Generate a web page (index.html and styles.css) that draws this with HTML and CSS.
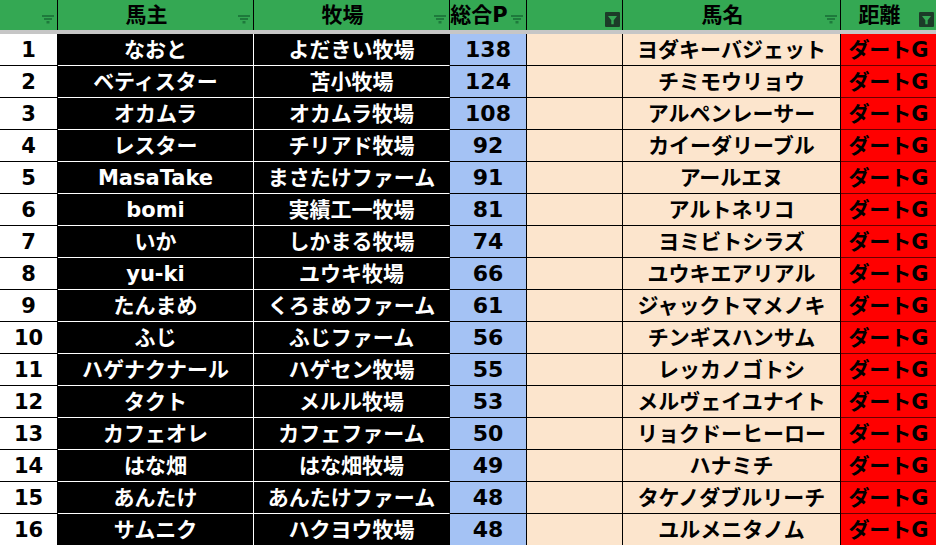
FILE: index.html
```html
<!DOCTYPE html>
<html lang="ja">
<head>
<meta charset="utf-8">
<title>馬主一覧</title>
<link rel="stylesheet" href="styles.css">
</head>
<body>
<div class="sheet">
  <div class="hcell"><span class="label"></span><span class="fbtn"><svg class="fi" width="12" height="9" viewBox="0 0 12 9"><rect x="0" y="0" width="12" height="2"/><rect x="2" y="3" width="8" height="2"/><rect x="4.5" y="6" width="3" height="2.5"/></svg></span></div>
  <div class="hcell"><span class="label">馬主</span><span class="fbtn"><svg class="fi" width="12" height="9" viewBox="0 0 12 9"><rect x="0" y="0" width="12" height="2"/><rect x="2" y="3" width="8" height="2"/><rect x="4.5" y="6" width="3" height="2.5"/></svg></span></div>
  <div class="hcell"><span class="label">牧場</span><span class="fbtn"><svg class="fi" width="12" height="9" viewBox="0 0 12 9"><rect x="0" y="0" width="12" height="2"/><rect x="2" y="3" width="8" height="2"/><rect x="4.5" y="6" width="3" height="2.5"/></svg></span></div>
  <div class="hcell"><span class="label">総合P</span><span class="fbtn"><svg class="fi" width="12" height="9" viewBox="0 0 12 9"><rect x="0" y="0" width="12" height="2"/><rect x="2" y="3" width="8" height="2"/><rect x="4.5" y="6" width="3" height="2.5"/></svg></span></div>
  <div class="hcell"><span class="label"></span><span class="fbtn"><svg class="fa" width="15" height="15" viewBox="0 0 15 15"><rect width="15" height="15" rx="1" class="fa-bg"/><path d="M3 4h9l-3.3 4.2v4h-2.4v-4z" class="fa-fg"/></svg></span></div>
  <div class="hcell"><span class="label">馬名</span><span class="fbtn"><svg class="fi" width="12" height="9" viewBox="0 0 12 9"><rect x="0" y="0" width="12" height="2"/><rect x="2" y="3" width="8" height="2"/><rect x="4.5" y="6" width="3" height="2.5"/></svg></span></div>
  <div class="hcell last"><span class="label">距離</span><span class="fbtn"><svg class="fa" width="15" height="15" viewBox="0 0 15 15"><rect width="15" height="15" rx="1" class="fa-bg"/><path d="M3 4h9l-3.3 4.2v4h-2.4v-4z" class="fa-fg"/></svg></span></div>
  <div class="freeze"></div>

  <div class="c num">1</div><div class="c dark">なおと</div><div class="c dark farm">よだきい牧場</div><div class="c pts">138</div><div class="c peach"></div><div class="c peach">ヨダキーバジェット</div><div class="c dist">ダートG</div>
  <div class="c num">2</div><div class="c dark">ベティスター</div><div class="c dark farm">苫小牧場</div><div class="c pts">124</div><div class="c peach"></div><div class="c peach">チミモウリョウ</div><div class="c dist">ダートG</div>
  <div class="c num">3</div><div class="c dark">オカムラ</div><div class="c dark farm">オカムラ牧場</div><div class="c pts">108</div><div class="c peach"></div><div class="c peach">アルペンレーサー</div><div class="c dist">ダートG</div>
  <div class="c num">4</div><div class="c dark">レスター</div><div class="c dark farm">チリアド牧場</div><div class="c pts">92</div><div class="c peach"></div><div class="c peach">カイーダリーブル</div><div class="c dist">ダートG</div>
  <div class="c num">5</div><div class="c dark">MasaTake</div><div class="c dark farm">まさたけファーム</div><div class="c pts">91</div><div class="c peach"></div><div class="c peach">アールエヌ</div><div class="c dist">ダートG</div>
  <div class="c num">6</div><div class="c dark">bomi</div><div class="c dark farm">実績工一牧場</div><div class="c pts">81</div><div class="c peach"></div><div class="c peach">アルトネリコ</div><div class="c dist">ダートG</div>
  <div class="c num">7</div><div class="c dark">いか</div><div class="c dark farm">しかまる牧場</div><div class="c pts">74</div><div class="c peach"></div><div class="c peach">ヨミビトシラズ</div><div class="c dist">ダートG</div>
  <div class="c num">8</div><div class="c dark">yu-ki</div><div class="c dark farm">ユウキ牧場</div><div class="c pts">66</div><div class="c peach"></div><div class="c peach">ユウキエアリアル</div><div class="c dist">ダートG</div>
  <div class="c num">9</div><div class="c dark">たんまめ</div><div class="c dark farm">くろまめファーム</div><div class="c pts">61</div><div class="c peach"></div><div class="c peach">ジャックトマメノキ</div><div class="c dist">ダートG</div>
  <div class="c num">10</div><div class="c dark">ふじ</div><div class="c dark farm">ふじファーム</div><div class="c pts">56</div><div class="c peach"></div><div class="c peach">チンギスハンサム</div><div class="c dist">ダートG</div>
  <div class="c num">11</div><div class="c dark">ハゲナクナール</div><div class="c dark farm">ハゲセン牧場</div><div class="c pts">55</div><div class="c peach"></div><div class="c peach">レッカノゴトシ</div><div class="c dist">ダートG</div>
  <div class="c num">12</div><div class="c dark">タクト</div><div class="c dark farm">メルル牧場</div><div class="c pts">53</div><div class="c peach"></div><div class="c peach">メルヴェイユナイト</div><div class="c dist">ダートG</div>
  <div class="c num">13</div><div class="c dark">カフェオレ</div><div class="c dark farm">カフェファーム</div><div class="c pts">50</div><div class="c peach"></div><div class="c peach">リョクドーヒーロー</div><div class="c dist">ダートG</div>
  <div class="c num">14</div><div class="c dark">はな畑</div><div class="c dark farm">はな畑牧場</div><div class="c pts">49</div><div class="c peach"></div><div class="c peach">ハナミチ</div><div class="c dist">ダートG</div>
  <div class="c num">15</div><div class="c dark">あんたけ</div><div class="c dark farm">あんたけファーム</div><div class="c pts">48</div><div class="c peach"></div><div class="c peach">タケノダブルリーチ</div><div class="c dist">ダートG</div>
  <div class="c num">16</div><div class="c dark">サムニク</div><div class="c dark farm">ハクヨウ牧場</div><div class="c pts">48</div><div class="c peach"></div><div class="c peach">ユルメニタノム</div><div class="c dist">ダートG</div>
</div>
</body>
</html>
```
FILE: styles.css
```css
html, body {
  margin: 0;
  padding: 0;
  background: #ffffff;
  overflow: hidden;
}

.sheet {
  display: grid;
  grid-template-columns: 58px 196px 196px 77px 96px 218px 95px;
  grid-template-rows: 30px 4px repeat(16, 32px);
  width: 936px;
  font-family: "DejaVu Sans", "Noto Sans CJK JP", sans-serif;
  font-weight: 700;
  font-size: 21px;
  color: #000;
}

.hcell {
  box-sizing: border-box;
  background: #34a853;
  border-right: 1px solid #000;
  display: flex;
  align-items: stretch;
}
.hcell.last { border-right: none; }

.label {
  flex: 1;
  display: flex;
  align-items: center;
  justify-content: center;
  white-space: nowrap;
  line-height: 1;
  font-size: 21px;
}

.fbtn {
  width: 18px;
  flex: none;
  display: flex;
  flex-direction: column;
  align-items: flex-end;
  padding-right: 2px;
  box-sizing: border-box;
}
.fi {
  margin-top: 15px;
  margin-right: 1px;
  fill: #1e7a3c;
}
.fa {
  margin-top: 12px;
}
.fa-bg { fill: #1c3b28; }
.fa-fg { fill: #34a853; }

.freeze {
  grid-column: 1 / -1;
  background: #c6c6c6;
}

.c {
  box-sizing: border-box;
  border-right: 1px solid #000;
  border-bottom: 1px solid #000;
  display: flex;
  align-items: center;
  justify-content: center;
  white-space: nowrap;
  line-height: 1;
  padding-top: 1px;
}

.num { background: #ffffff; color: #000; }
.dark { background: #000; color: #fff; border-right-color: #fff; border-bottom-color: #fff; }
.dark.farm { border-right-color: #000; }
.pts { background: #a4c2f4; font-size: 22px; }
.peach { background: #fce5cd; }
.dist { background: #ff0000; border-right: none; border-bottom-color: #6a0000; }
```
